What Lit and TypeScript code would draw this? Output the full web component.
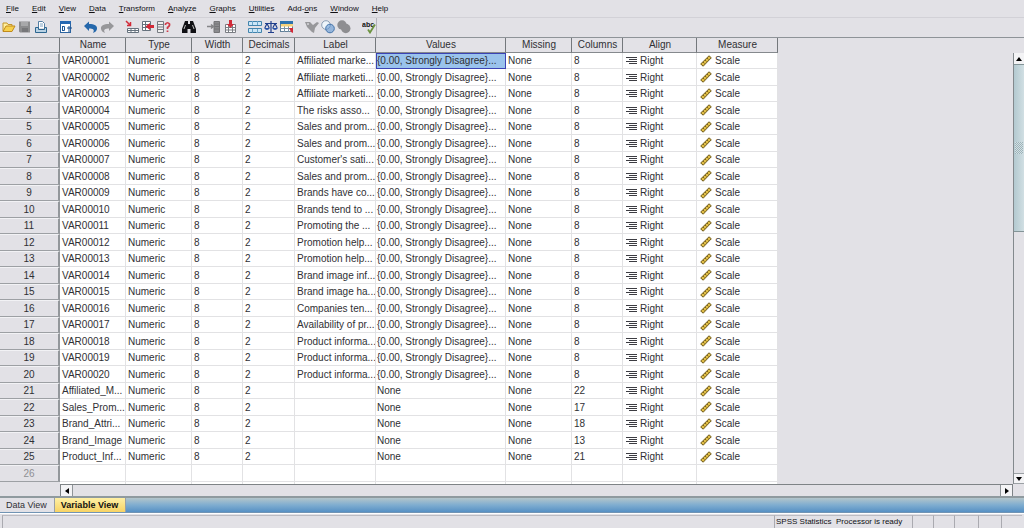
import { LitElement, html, css, svg } from "lit";
import { customElement, state } from "lit/decorators.js";

const menus: [string, string, string][] = [
  ["", "F", "ile"], ["", "E", "dit"], ["", "V", "iew"], ["", "D", "ata"], ["", "T", "ransform"], ["", "A", "nalyze"],
  ["", "G", "raphs"], ["", "U", "tilities"], ["Add-", "o", "ns"], ["", "W", "indow"], ["", "H", "elp"],
];

const icons: Record<string, unknown> = {
  open: svg`<path d="M1 11V3h4l1 1.500h4V6" fill="#fff0a0" stroke="#c49428"/><path d="M1 11.500L4 6h9l-3 5.500z" fill="#f7d04c" stroke="#c08a1c"/>`,
  save: svg`<path d="M1 1.500h11v11H2l-1-1z" fill="#8c8c8e"/><path d="M3 2h7v4H3z" fill="#a8a8aa"/><path d="M4 8h6v4H4z" fill="#77777a"/>`,
  print: svg`<path d="M4.500 8V1.500h4l2 2V8" fill="#fff" stroke="#557fa5"/><path d="M6 4h3M6 6h3" stroke="#7fa3c2"/><path d="M1.500 7.500h3v2h6v-2h2v5h-11z" fill="#b9d2e4" stroke="#2d6690"/>`,
  dialog: svg`<rect x="1.500" y="1.500" width="10" height="11" fill="#fff" stroke="#2c64a0"/><path d="M1 1h11v3H1z" fill="#2668b2"/><path d="M3.500 6v5M3.500 6.500h2v4h-2" stroke="#205898" fill="none"/><path d="M10 6v6M8 8h5" stroke="#174c8c" fill="none"/>`,
  undo: svg`<path d="M0 6l5-4.500V4c5.500 0 8.500 1.500 8 5-.3 2-1.800 3.300-4 4C11 9.500 9 8.500 5 8.500V11z" fill="#2467ab"/>`,
  redo: svg`<path d="M14 6L9 1.500V4C3.500 4 .5 5.500 1 9c.3 2 1.800 3.300 4 4C3 9.500 5 8.500 9 8.500V11z" fill="#97979a"/>`,
  gotoCase: svg`<path d="M1 1l4.500 4.500M5.500 2v3.500H2" stroke="#d22a38" stroke-width="1.500" fill="none"/><path d="M2.500 8.500h11v4h-11zM2 10.500h11M6 8.500v4M10 8.500v4" fill="#fff" stroke="#66727e"/>`,
  gotoVar: svg`<path d="M1.500 1.500h8v9h-8zM1.500 4.500h8M1.500 7.500h8M4.500 1.500v9" fill="#fff" stroke="#66727e"/><path d="M4.500 6.500L9 3v2h4v3H9v2z" fill="#d22a38"/>`,
  variables: svg`<path d="M.5 1.500h6v11h-6zM.5 4.500h6M.5 7h6M.5 9.500h6" fill="#eee" stroke="#777b82"/><path d="M8.500 5V4Q10.500 1.500 12.500 4 13 6 10.500 7.500V9M10.500 10.500V12" stroke="#cf3b48" stroke-width="1.700" fill="none"/>`,
  find: svg`<path d="M3 1h3v3h2V1h3l3 8v4H8.500V9h-3v4H0V9z" fill="#101014"/><path d="M3.500 5L2 9M10.500 5L12 9" stroke="#bbb"/>`,
  insertCase: svg`<path d="M7 1.500h5.500v11H7zM7 4h5.500M7 6.500h5.500M7 9h5.500" fill="#8b8b8e" stroke="#747477"/><path d="M0 6.500h6M4 4.500l2.500 2L4 8.500" stroke="#858588" stroke-width="1.500"/>`,
  insertVar: svg`<path d="M2.500 4.500h10v8h-10zM2.500 7.500h10M2.500 10h10M5.500 5v7M9.500 5v7" fill="#fff" stroke="#7a7d83"/><path d="M6 0h3v4h2L7.500 8 4 4h2z" fill="#d22a38"/>`,
  split: svg`<path d="M.5 1.500h13v4H.5zM.5 8.500h13v4H.5z" fill="#cbe6f7" stroke="#4384ad"/><path d="M4.500 1v4M9.500 1v4M4.500 9v4M9.500 9v4" stroke="#6ba5c9"/>`,
  weight: svg`<path d="M7 1v11M1 3.500h12M4 12.500h6M3 3.500L.8 8M3 3.500L5.200 8M11 3.500L8.800 8M11 3.500L13.200 8" stroke="#203f8c" stroke-width="1.200"/><path d="M0 8h6q-3 4-6 0zM8 8h6q-3 4-6 0z" fill="#2853aa"/>`,
  select: svg`<rect x=".5" y="1.500" width="12" height="10" fill="#fff" stroke="#62819a"/><path d="M0 1h13v3H0z" fill="#2d73ae"/><path d="M0 8.500h13M4.500 4v8M8.500 4v8" stroke="#7892a5"/><path d="M1 4h12v2.500H1z" fill="#f5d27a"/><path d="M9 8h4v5l-2-1z" fill="#d22a38"/>`,
  labels: svg`<path d="M0 2h5l3 3 4-3 2 1-4 5-1 5-2-1-5-5z" fill="#98989b"/><circle cx="3" cy="4" r="1" fill="#d5d5d8"/>`,
  sets: svg`<circle cx="5" cy="5" r="4.300" fill="#eef5fb" stroke="#8a9eb5"/><circle cx="9" cy="8.500" r="4.300" fill="#6297d4" fill-opacity=".6" stroke="#4474aa"/>`,
  showAll: svg`<circle cx="5" cy="5" r="4.700" fill="#8e8e91"/><circle cx="8.800" cy="8.500" r="4.700" fill="#8e8e91"/>`,
  spell: svg`<text x="0" y="7" font-size="7" font-weight="bold" font-family="Liberation Sans, sans-serif" fill="#111">abc</text><path d="M6 9.500l2 3 5-8" fill="none" stroke="#6c9340" stroke-width="1.800"/>`,
};

const groups: [string, string][][] = [
  [["open", "Open"], ["save", "Save"], ["print", "Print"]],
  [["dialog", "Recall dialog"]],
  [["undo", "Undo"], ["redo", "Redo"]],
  [["gotoCase", "Go to case"], ["gotoVar", "Go to variable"], ["variables", "Variables"]],
  [["find", "Find"]],
  [["insertCase", "Insert case"], ["insertVar", "Insert variable"]],
  [["split", "Split file"], ["weight", "Weight cases"], ["select", "Select cases"]],
  [["labels", "Value labels"], ["sets", "Use sets"], ["showAll", "Show all"]],
  [["spell", "Spell check"]],
];

const columns = ["Name", "Type", "Width", "Decimals", "Label", "Values", "Missing", "Columns", "Align", "Measure"];

const labels = [
  "Affiliated marke...", "Affiliate marketi...", "Affiliate marketi...", "The risks asso...", "Sales and prom...",
  "Sales and prom...", "Customer's sati...", "Sales and prom...", "Brands have co...", "Brands tend to ...",
  "Promoting the ...", "Promotion help...", "Promotion help...", "Brand image inf...", "Brand image ha...",
  "Companies ten...", "Availability of pr...", "Product informa...", "Product informa...", "Product informa...",
];
const computed: [string, string][] = [
  ["Affiliated_M...", "22"], ["Sales_Prom...", "17"], ["Brand_Attri...", "18"], ["Brand_Image", "13"], ["Product_Inf...", "21"],
];
const rows: string[][] = [
  ...labels.map((l, i) => [`VAR${String(i + 1).padStart(5, "0")}`, "Numeric", "8", "2", l, "{0.00, Strongly Disagree}...", "None", "8", "Right", "Scale"]),
  ...computed.map(([n, w]) => [n, "Numeric", "8", "2", "", "None", "None", w, "Right", "Scale"]),
  Array(10).fill(""),
];

const alignIcon = html`<svg class="glyph" width="11" height="9" viewBox="0 0 11 9" aria-hidden="true"><path d="M0 1.500h11M3 3.500h8M0 5.500h11M3 7.500h8" stroke="#3c3c42" stroke-width="1.200"/></svg>`;
const rulerIcon = html`<svg class="glyph" width="12" height="12" viewBox="0 0 12 12" aria-hidden="true"><path d="M.7 9L9 .8l2.300 2L3.200 11.200z" fill="#e0bd45" stroke="#6f5a1a"/><path d="M3 7l1.500 1.500M5 5l1.500 1.500M7 3l1.500 1.500" stroke="#6f5a1a" stroke-width=".9"/></svg>`;

@customElement("app-root")
export class AppRoot extends LitElement {
  @state() private view = "Variable View";

  static styles = css`
    :host { display: flex; flex-direction: column; height: 100vh; overflow: hidden; background: #e2e1e6; color: #303034; font: 10px/14px "Liberation Sans", Arial, sans-serif; }
    * { box-sizing: border-box; }
    button { font: inherit; color: inherit; border: 0; margin: 0; padding: 0; background: none; white-space: nowrap; }
    svg { display: block; }
    .menu { display: flex; gap: 13px; height: 17px; padding: 1px 6px; font-size: 8px; flex: none; color: #101014; }
    .bar { flex: none; height: 20px; display: flex; border-top: 1px solid #d2d1d7; }
    .tools { display: flex; align-items: center; gap: 11px; padding: 0 0 2px 2px; border-right: 1px solid #b4b4ba; }
    .group { display: flex; gap: 2px; }
    .sheet { flex: 1; min-height: 0; display: grid; grid-template-columns: 1fr 11px; grid-template-rows: 1fr 12px; border-top: 1px solid #8e9398; border-bottom: 2px solid #8f9a9f; }
    .pane { overflow: hidden; min-width: 0; min-height: 0; }
    table { border-collapse: separate; border-spacing: 0; table-layout: fixed; width: 778px; }
    .c60 { width: 60px; } .c66 { width: 66px; } .c51 { width: 51px; } .c52 { width: 52px; } .c81 { width: 81px; } .c130 { width: 130px; } .c74 { width: 74px; }
    th, td { padding: 0 0 0 2px; font-weight: normal; white-space: nowrap; overflow: hidden; height: 16px; line-height: 14px; }
    tr:nth-child(even) > * { height: 17px; }
    thead tr > th { height: 15px; border-right: 1px solid #74787c; border-bottom: 1px solid #85898d; background: #e3e2e7; text-align: center; padding: 0 0 0 1px; }
    tbody th { border-right: 2px solid #93979b; border-bottom: 1px solid #9da0a4; border-top: 1px solid #f2f2f5; padding: 0; }
    td { background: #fff; border-right: 1px solid #e2e2e4; border-bottom: 1px solid #e2e2e4; line-height: 15px; }
    td.values { padding-left: 1px; }
    td.picked { background: #9ac3ec; outline: 1px solid #3b43b4; outline-offset: -1px; }
    .dim { color: #8f8f93; }
    .rest th { border: 0; }
    .cell { display: flex; align-items: center; gap: 3px; padding-left: 1px; }
    .glyph { flex: none; }
    .vbar { display: flex; flex-direction: column; border-left: 1px solid #83898d; margin-top: 15px; min-height: 0; }
    .vbar button, .hbar button { background: #f3f3f5; flex: none; display: grid; place-items: center; }
    .vbar button { height: 11px; }
    .vbar button:last-child { border-top: 1px solid #9ba0a4; border-bottom: 1px solid #9ba0a4; }
    .track { flex: 1; display: flex; flex-direction: column; }
    .thumb { height: 41%; border: solid #839497; border-width: 1px 0; background: linear-gradient(90deg, #b3c9d0, #d1dfe3); display: grid; place-items: center; }
    .grip { width: 8px; height: 12px; background: repeating-conic-gradient(#9db3b9 0 25%, #d3e0e4 0 50%) 0 0 / 2px 2px; }
    .hbar { display: flex; justify-content: space-between; margin-left: 60px; border: 1px solid #7e8386; border-bottom: 0; }
    .hbar button { width: 12px; }
    .hbar button:first-child { border-right: 1px solid #8f9498; }
    .hbar button:last-child { border-left: 1px solid #8f9498; }
    .tabs { display: flex; flex: none; height: 15px; background: linear-gradient(#b3c5cb, #7fadd0 50%, #5690c4); font-size: 9px; border-bottom: 1px solid #7194b4; }
    .tab { background: #e2e1e6; padding: 0 7px 0 6px; border-right: 1px solid #9ba0a5; }
    .tab.on { font-weight: bold; color: #111; background: linear-gradient(#fff0a5, #f8d364); }
    .status { display: grid; grid-template-columns: 1fr 138px 21px 21px 24px 23px 21px; padding: 1px 2px 0; height: 15px; flex: none; border-top: 1px solid #fff; font-size: 8px; line-height: 12px; white-space: pre; color: #101014; }
    .status > * { border-left: 1px solid #aaaab0; border-top: 1px solid #bcbcc2; padding-left: 1px; }
  `;

  private cell(value: string, col: number, row: number) {
    if (value && col >= 8) return html`<td><div class="cell">${col === 8 ? alignIcon : rulerIcon}<span>${value}</span></div></td>`;
    return html`<td class="${col === 5 ? "values" : ""} ${col === 5 && row === 0 ? "picked" : ""}">${value}</td>`;
  }

  render() {
    const widths = ["c60", "c66", "c66", "c51", "c52", "c81", "c130", "c66", "c51", "c74", "c81"];
    return html`
      <nav class="menu">${menus.map(([a, b, c]) => html`<button>${a}<u>${b}</u>${c}</button>`)}</nav>
      <div class="bar"><div class="tools" role="toolbar">
        ${groups.map((g) => html`<div class="group">${g.map(([id, title]) => html`<button aria-label=${title}><svg width="14" height="14" viewBox="0 0 14 14" fill="none">${icons[id]}</svg></button>`)}</div>`)}
      </div></div>
      <main class="sheet">
        <div class="pane">
          <table>
            <colgroup>${widths.map((w) => html`<col class=${w}>`)}</colgroup>
            <thead><tr><th></th>${columns.map((c) => html`<th scope="col">${c}</th>`)}</tr></thead>
            <tbody>
              ${rows.map((r, i) => html`<tr><th scope="row" class=${i === 25 ? "dim" : ""}>${i + 1}</th>${r.map((v, c) => this.cell(v, c, i))}</tr>`)}
              <tr class="rest"><th></th>${columns.map(() => html`<td></td>`)}</tr>
            </tbody>
          </table>
        </div>
        <div class="vbar">
          <button aria-label="Scroll up"><svg width="6" height="4"><path d="M0 4l3-4 3 4z"/></svg></button>
          <div class="track"><div class="thumb"><div class="grip"></div></div></div>
          <button aria-label="Scroll down"><svg width="6" height="4"><path d="M0 0h6L3 4z"/></svg></button>
        </div>
        <div class="hbar">
          <button aria-label="Scroll left"><svg width="4" height="6"><path d="M4 0v6L0 3z"/></svg></button>
          <button aria-label="Scroll right"><svg width="4" height="6"><path d="M0 0v6l4-3z"/></svg></button>
        </div>
      </main>
      <nav class="tabs">${["Data View", "Variable View"].map((t) => html`<button class="tab ${t === this.view ? "on" : ""}" @click=${() => (this.view = t)}>${t}</button>`)}</nav>
      <footer class="status"><span></span><span>SPSS Statistics  Processor is ready</span><span></span><span></span><span></span><span></span><span></span></footer>
    `;
  }
}
